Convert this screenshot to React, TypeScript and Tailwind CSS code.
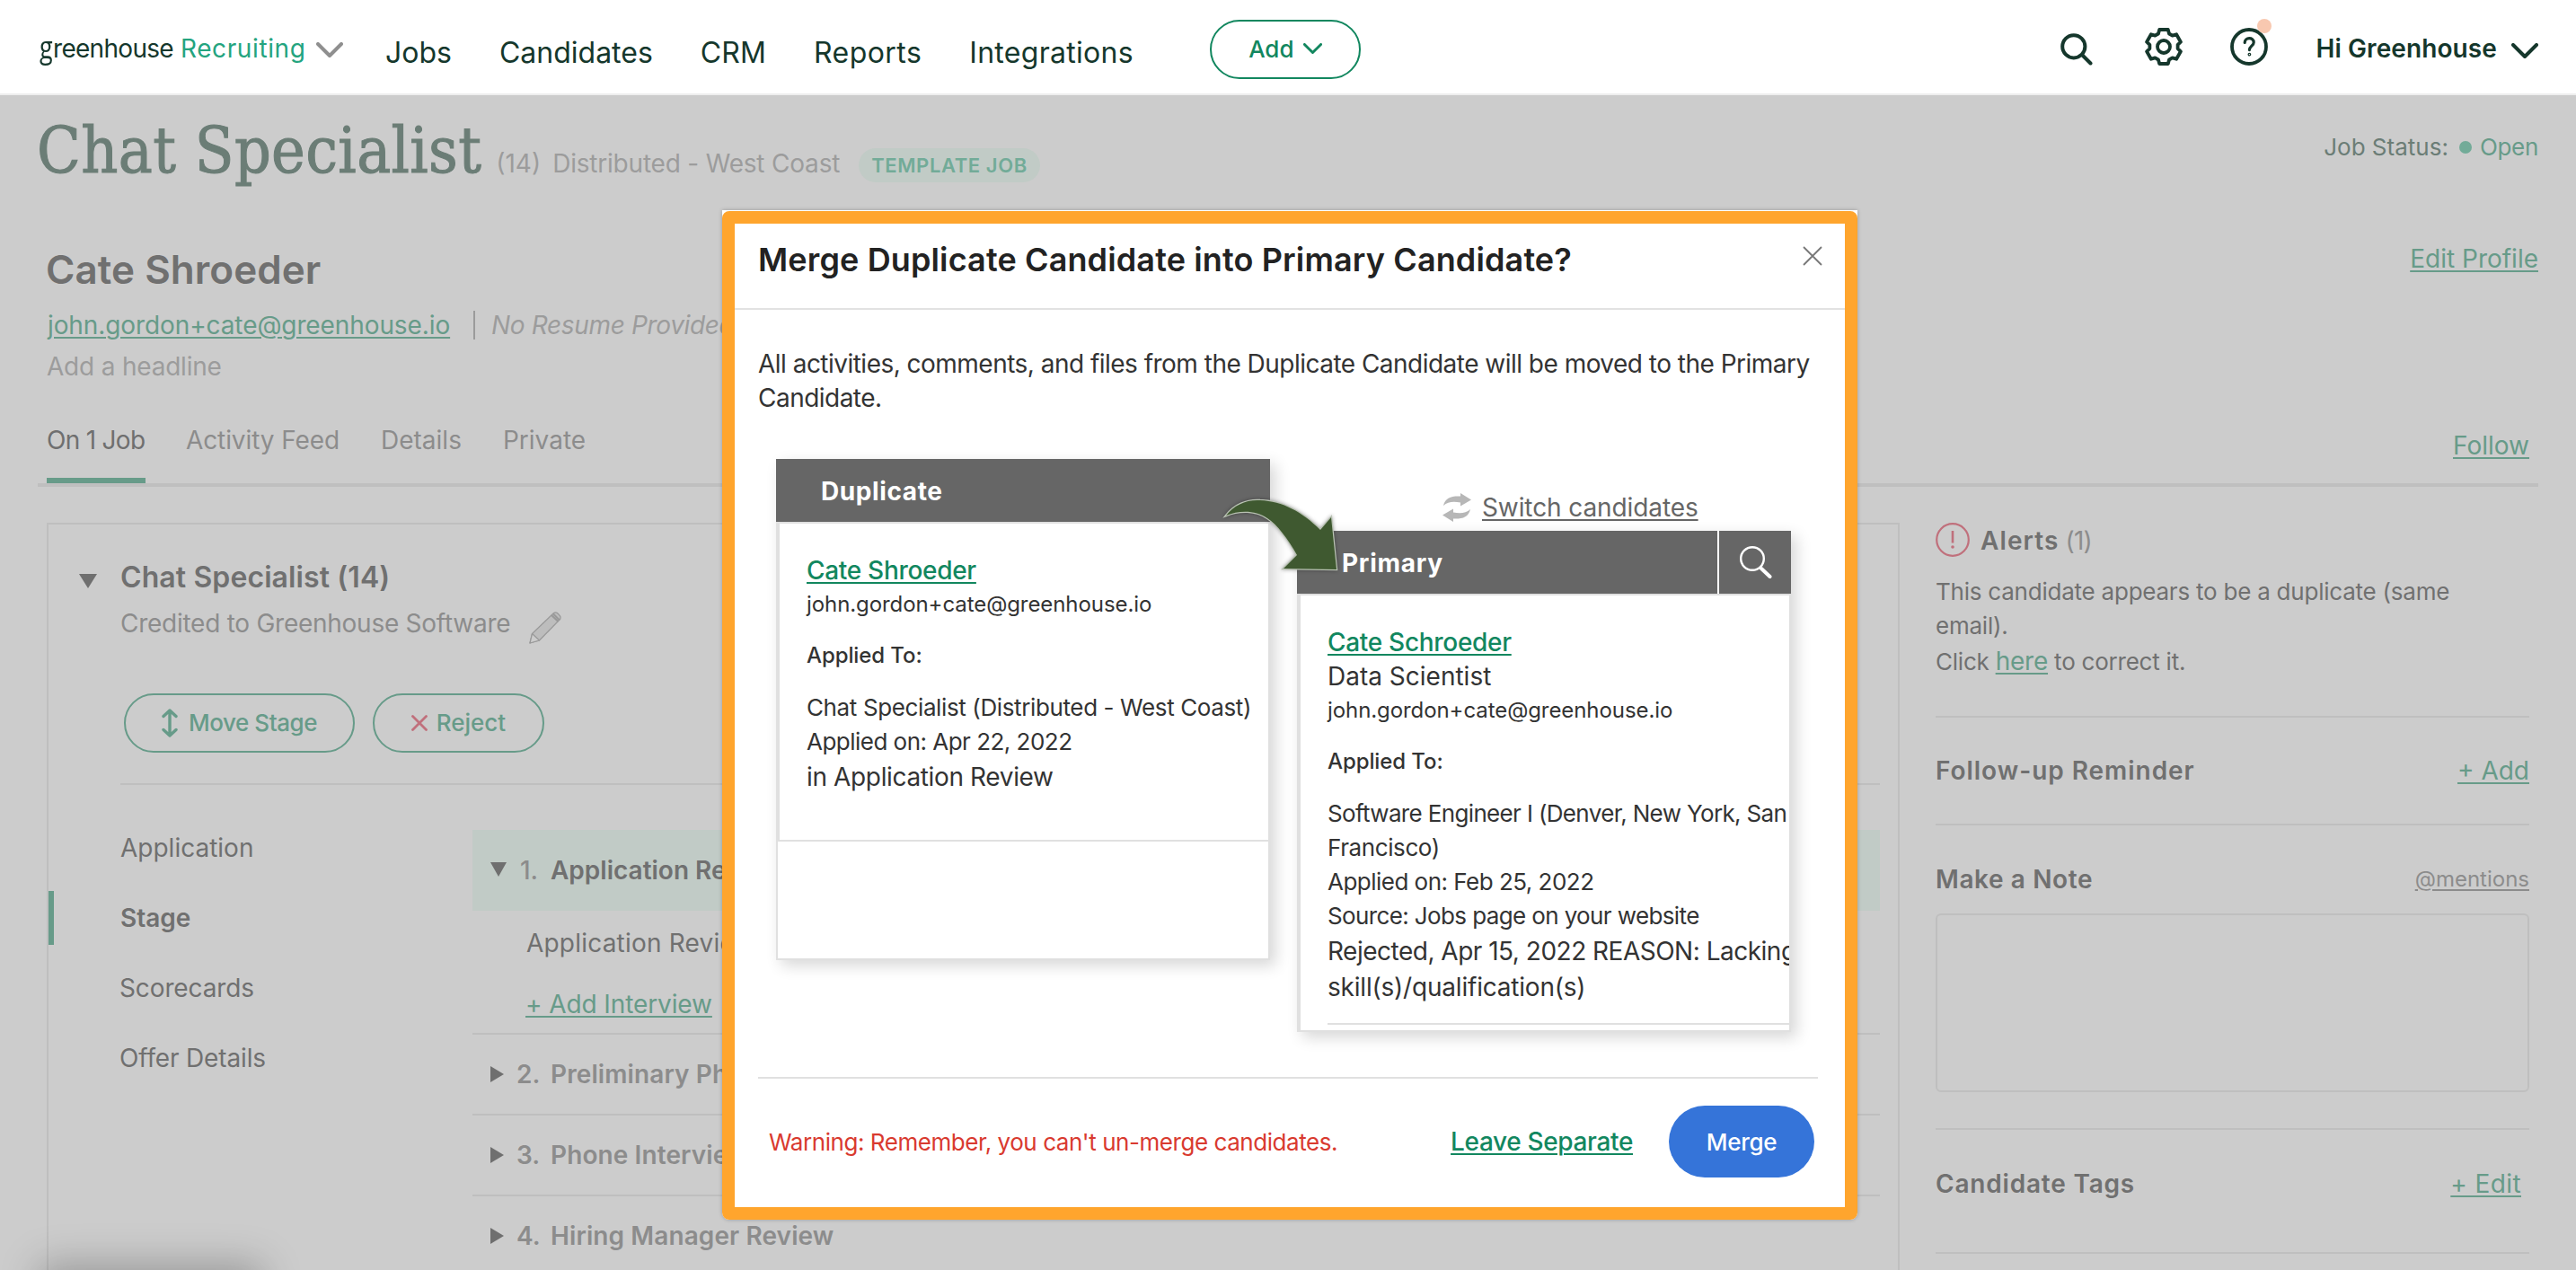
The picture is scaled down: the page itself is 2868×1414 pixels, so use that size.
import React from 'react';
import clsx from 'clsx';

const NavChevron = ({ className, width = 4 }: { className: string; width?: number }) => (
  <svg className={className} viewBox="0 0 30 17" fill="none" stroke="currentColor" strokeWidth={width} strokeLinecap="round" strokeLinejoin="round">
    <path d="M2 2 L15 15 L28 2" />
  </svg>
);

const SearchIcon = () => (
  <svg className="w-9 h-9" viewBox="0 0 36 36" fill="none" stroke="currentColor" strokeWidth="4" strokeLinecap="round">
    <circle cx="14.8" cy="14.8" r="12.6" />
    <path d="M24.5 24.5 L33.5 33.5" />
  </svg>
);

const GearIcon = () => (
  <svg className="w-[42px] h-[42px]" viewBox="-21 -21 42 42" fill="none" stroke="currentColor" strokeWidth="3.8" strokeLinejoin="round">
    <path d="M-4.8 -19 L4.8 -19 L6 -14.5 L9.6 -12.4 L14.1 -13.7 L18.9 -5.3 L15.6 -2.1 L15.6 2.1 L18.9 5.3 L14.1 13.7 L9.6 12.4 L6 14.5 L4.8 19 L-4.8 19 L-6 14.5 L-9.6 12.4 L-14.1 13.7 L-18.9 5.3 L-15.6 2.1 L-15.6 -2.1 L-18.9 -5.3 L-14.1 -13.7 L-9.6 -12.4 L-6 -14.5 Z" />
    <circle r="7" />
  </svg>
);

const HelpIcon = () => (
  <svg className="w-[42px] h-[42px]" viewBox="-21 -21 42 42" fill="none" stroke="currentColor" strokeWidth="3.8" strokeLinecap="round">
    <circle r="19" />
    <path d="M-4.8 -4.5 C-4.8 -11 5.2 -11 5.2 -4.8 C5.2 -1 0.4 -0.6 0.4 3.6" strokeWidth="3.2" />
    <circle cx="0.4" cy="8.6" r="0.6" strokeWidth="2.6" />
  </svg>
);

const PencilIcon = () => (
  <svg className="w-9 h-9" viewBox="0 0 36 36" fill="#bdbdbd" stroke="#999999" strokeWidth="1.2" strokeLinejoin="round">
    <path d="M1 35 L3.5 24.5 L27 2 Q30 -0.5 33 3 Q36.5 6.5 34 9 L11.5 32 Z" />
    <path d="M1 35 L3.5 24.5 L11.5 32 Z" fill="#cccccc" />
    <path d="M25 4 L32.5 11 M27 2.5 L34 9.5" strokeWidth="2" />
  </svg>
);

const SwitchIcon = () => (
  <svg className="w-8 h-8" viewBox="0 0 32 32" fill="#b7b7b7">
    <path d="M1 14 C3 5 10 3 20 3.5 V0 L32 7.5 L20 14.5 V10.5 C12 9 6 9.5 1 14 Z" />
    <path d="M31 18 C29 27 22 29 12 28.5 V32 L0 24.5 L12 17.5 V21.5 C20 23 26 22.5 31 18 Z" />
  </svg>
);

const MergeArrow = () => (
  <svg className="absolute left-[516px] top-[39px] w-[136px] h-[92px] drop-shadow-[0_0_2px_rgba(0,0,0,0.35)]" viewBox="0 0 136 92">
    <path
      d="M5 24 C14 12 28 6 43 7 C68 8 90 20 110 40 L122 26 L128 84 L69 83 L84 68 C74 50 62 34 51 27 C38 18 20 18 5 24 Z"
      fill="#3f5930"
      stroke="#b9c2b3"
      strokeWidth="2.5"
      paintOrder="stroke"
    />
  </svg>
);

const Triangle = ({ open, className }: { open?: boolean; className?: string }) => (
  <svg className={className} viewBox="0 0 20 20" fill="#6f6f6f" preserveAspectRatio="none">
    <path d={open ? 'M0 0 H20 L10 20 Z' : 'M0 0 L20 10 L0 20 Z'} />
  </svg>
);

const navItems = [
  { label: 'Jobs', className: 'tracking-normal' },
  { label: 'Candidates', className: 'tracking-normal' },
  { label: 'CRM', className: 'tracking-[0.1px]' },
  { label: 'Reports', className: 'tracking-[0.45px]' },
  { label: 'Integrations', className: 'tracking-[0.28px]' },
];

const stages = [
  { n: '2.', name: 'Preliminary Phone Screen' },
  { n: '3.', name: 'Phone Interview' },
  { n: '4.', name: 'Hiring Manager Review' },
];

const link = 'underline decoration-2 underline-offset-[3px]';

const Header: React.FC = () => (
  <header className="flex items-center h-[106px] pl-11 pr-[42px] bg-white border-b-2 border-[#eeeeee] text-[#15372c]">
    <div className="flex items-center w-[385px] pt-[3px]">
      <span className="flex items-baseline text-[28px] leading-8 whitespace-nowrap">
        <span className="inline-block w-[15px] origin-[50%_75%] scale-y-[1.3] font-['Open_Sans'] text-[27px]">g</span>
        <span className="tracking-[-0.7px]">reenhouse</span>
        <span className="ml-2 tracking-[0.6px] text-[#24a47f]">Recruiting</span>
      </span>
      <NavChevron className="w-[30px] h-[17px] ml-[12px] mt-1 text-[#8f8f8f]" />
    </div>
    <nav className="flex gap-[53px] pt-[13px] text-[32px] leading-10">
      {navItems.map((item) => (
        <a key={item.label} className={item.className}>{item.label}</a>
      ))}
    </nav>
    <button className="flex items-center justify-center gap-2.5 w-[168px] h-[66px] ml-[85px] mt-1.5 pb-0.5 rounded-full border-2 border-[#12875f] text-[#12875f] text-[26px] font-medium">
      Add
      <NavChevron className="w-[21px] h-3" width={4.2} />
    </button>

    <div className="flex items-center ml-auto">
      <div className="mt-1.5"><SearchIcon /></div>
      <div className="ml-[58px]"><GearIcon /></div>
      <div className="relative ml-[53px]">
        <HelpIcon />
        <span className="absolute -top-2.5 -right-1 w-4 h-4 rounded-full bg-[#f8c8b0]" />
      </div>
      <span className="ml-[53px] pt-1 text-[28px] leading-8 font-semibold tracking-[0.1px]">Hi Greenhouse</span>
      <NavChevron className="w-[30px] h-[17px] ml-[16px] mt-2" />
    </div>
  </header>
);

const CandidateHeader: React.FC = () => (
  <>
    <div className="flex items-baseline pt-5">
      <h1 className="ml-[-1px] font-['DejaVu_Serif_Condensed','DejaVu_Serif',serif] text-[71px] leading-[84px] tracking-[0.35px] [-webkit-text-stroke:1px_#6b7d76] text-[#6b7d76]">Chat Specialist</h1>
      <span className="ml-4 text-[28px] text-[#9c9c9c]">(14)</span>
      <span className="ml-[13px] text-[28px] tracking-[-0.2px] text-[#9c9c9c]">Distributed - West Coast</span>
      <span className="ml-[21px] px-[14px] rounded-full bg-[#c1cbc6] text-[22px] leading-[38px] font-semibold tracking-[0.6px] text-[#72ab98]">TEMPLATE JOB</span>
      <div className="flex items-center self-start ml-auto mt-[22px] text-[26px] leading-8">
        <span className="text-[#6b7d76]">Job Status:</span>
        <span className="w-3.5 h-3.5 ml-3 mr-[9px] rounded-full bg-[#72ab98]" />
        <span className="tracking-[-0.3px] text-[#679b89]">Open</span>
      </div>
    </div>

    <div className="flex items-start justify-between mt-[62px] pl-[9px]">
      <h2 className="text-[44px] leading-14 font-semibold tracking-[0.05px] text-[#707070]">Cate Shroeder</h2>
      <a className={clsx(link, 'text-[28px] leading-8 text-[#679b89]')}>Edit Profile</a>
    </div>
    <div className="flex items-center mt-[18px] pl-[9px] text-[28px] leading-8">
      <a className={clsx(link, 'pl-0.5 tracking-[-0.1px] text-[#679b89]')}>john.gordon+cate@greenhouse.io</a>
      <span className="w-0.5 h-8 ml-[26px] mr-[18px] bg-[#9b9b9b]" />
      <span className="italic tracking-[-0.35px] text-[#9c9c9c]">No Resume Provided</span>
    </div>
    <p className="mt-[14px] pl-2.5 text-[28px] leading-8 tracking-[-0.2px] text-[#9c9c9c]">Add a headline</p>

    <div className="flex mt-[50px] pl-2.5 pr-2.5 border-b-4 border-[#bfbfbf] text-[28px] leading-8 text-[#8c8c8c]">
      <div className="w-[110px] h-16 border-b-[6px] border-[#679b89] text-[#6f6f6f] tracking-[-0.7px] whitespace-nowrap">On 1 Job</div>
      <div className="ml-[45px] tracking-[-0.1px]">Activity Feed</div>
      <div className="ml-[46px]">Details</div>
      <div className="ml-[46px]">Private</div>
      <a className={clsx(link, 'ml-auto mt-1.5 text-[#679b89]')}>Follow</a>
    </div>
  </>
);

const JobPanel: React.FC = () => (
  <section className="w-[2063px] h-[900px] border-2 border-[#bfbfbf] text-[28px] leading-8 text-[#707070]">
    <div className="flex h-10 items-center mt-[39px]">
      <Triangle open className="w-5 h-4 ml-[34px] mt-2" />
      <h3 className="ml-[26px] text-[32px] leading-10 font-semibold tracking-[0.1px]">Chat Specialist (14)</h3>
    </div>
    <div className="flex items-center mt-3.5 ml-[80px] text-[#8c8c8c]">
      <span className="tracking-[-0.26px]">Credited to Greenhouse Software</span>
      <div className="ml-[21px] mt-1 -mb-1.5"><PencilIcon /></div>
    </div>

    <div className="flex gap-5 mt-[61px] ml-[84px] text-[26px] font-medium text-[#679b89]">
      <button className="flex items-center justify-center gap-3 w-[257px] h-[66px] rounded-full border-2">
        <svg className="w-[18px] h-8" viewBox="0 0 18 32" fill="none" stroke="currentColor" strokeWidth="3.4" strokeLinecap="round" strokeLinejoin="round">
          <path d="M9 2 V30 M2 8.5 L9 2 L16 8.5 M2 23.5 L9 30 L16 23.5" />
        </svg>
        <span className="tracking-[-0.45px]">Move Stage</span>
      </button>
      <button className="flex items-center justify-center gap-2.5 w-[191px] h-[66px] rounded-full border-2">
        <svg className="w-[18px] h-[18px]" viewBox="0 0 18 18" stroke="#c0707c" strokeWidth="2.8" strokeLinecap="round">
          <path d="M1.5 1.5 L16.5 16.5 M16.5 1.5 L1.5 16.5" />
        </svg>
        Reject
      </button>
    </div>

    <div className="h-0.5 mt-[34px] ml-20 mr-5 bg-[#bfbfbf]" />

    <div className="flex">
      <ul className="w-[472px] mt-[31px] leading-[78px]">
        <li className="pl-[80px]">Application</li>
        <li className="flex items-center font-semibold">
          <span className="w-1.5 h-[60px] mr-[74px] bg-[#679b89]" />Stage
        </li>
        <li className="pl-[79px] tracking-[-0.12px]">Scorecards</li>
        <li className="pl-[79px] tracking-[-0.15px]">Offer Details</li>
      </ul>
      <div className="flex-1 mt-[50px] mr-5">
        <div className="flex items-center h-[90px] pl-5 bg-[#c1cbc6] font-semibold">
          <Triangle open className="w-[18px] h-4 -mt-0.5" />
          <span className="w-[34px] ml-[15px] text-[#8c8c8c] font-medium">1.</span>
          Application Review
        </div>
        <p className="mt-5 pl-[60px] tracking-[0.2px]">Application Review</p>
        <p className="mt-9 pb-4 pl-[59px] border-b-2 border-[#bfbfbf]">
          <a className={clsx(link, 'text-[#679b89] tracking-[-0.1px]')}>+ Add Interview</a>
        </p>
        {stages.map((stage) => (
          <div key={stage.n} className="flex items-center h-[90px] pl-5 border-b-2 border-[#bfbfbf] font-semibold text-[#8c8c8c] tracking-[0.1px]">
            <Triangle className="w-[15px] h-[18px]" />
            <span className="w-[38px] ml-[14px]">{stage.n}</span>
            {stage.name}
          </div>
        ))}
      </div>
    </div>
  </section>
);

const Sidebar: React.FC = () => (
  <aside className="w-[661px] mr-2.5 text-[28px] text-[#707070]">
    <div className="flex items-center h-[38px]">
      <svg className="w-[38px] h-[38px]" viewBox="0 0 38 38" fill="none" stroke="#c0707c" strokeWidth="2.2">
        <circle cx="19" cy="19" r="17.8" />
        <path d="M19 9 V22.5" strokeWidth="2.6" />
        <circle cx="19" cy="27" r="1.8" fill="#c0707c" stroke="none" />
      </svg>
      <h4 className="ml-3 pt-0.5 font-semibold tracking-[1.1px]">Alerts</h4>
      <span className="ml-[7px] pt-0.5 text-[28px] tracking-[-0.8px] text-[#8c8c8c]">(1)</span>
    </div>
    <div className="mt-5 text-[26px] leading-[38px] tracking-[-0.23px]">
      <p>
        This candidate appears to be a duplicate (same<br />
        email).
      </p>
      <p className="leading-10">
        Click <a className={clsx(link, 'text-[28px] text-[#679b89]')}>here</a> to correct it.
      </p>
    </div>
    <div className="h-0.5 mt-10 bg-[#bfbfbf]" />
    <div className="flex items-center justify-between h-[118px]">
      <h4 className="font-semibold tracking-[0.96px]">Follow-up Reminder</h4>
      <a className={clsx(link, 'text-[#679b89]')}>+ Add</a>
    </div>
    <div className="h-0.5 bg-[#bfbfbf]" />
    <div className="flex items-center justify-between h-[98px] pt-[21px]">
      <h4 className="font-semibold tracking-[0.6px]">Make a Note</h4>
      <a className={clsx(link, 'text-[24px] text-[#8c8c8c]')}>@mentions</a>
    </div>
    <div className="h-[199px] rounded-md border-2 border-[#bfbfbf]" />
    <div className="h-0.5 mt-10 bg-[#bfbfbf]" />
    <div className="flex items-center justify-between h-[136px] pb-4 pr-[9px]">
      <h4 className="font-semibold tracking-[0.8px]">Candidate Tags</h4>
      <a className={clsx(link, 'text-[#679b89] tracking-[0.4px]')}>+ Edit</a>
    </div>
    <div className="h-0.5 bg-[#bfbfbf]" />
  </aside>
);

const cardShadow = 'shadow-[6px_6px_16px_rgba(0,0,0,0.16)]';

const DuplicateCard: React.FC = () => (
  <div className={clsx('flex flex-col w-[550px] h-[558px]', cardShadow)}>
    <div className="h-[70px] pl-[50px] bg-[#666666] text-white text-[28px] leading-[73px] font-bold tracking-[0.6px]">Duplicate</div>
    <div className="flex-1 border-x-2 border-b-2 border-[#e0e0e0]">
      <div className="h-[356px] pt-[33px] pl-[30px] border-l-2 border-y-2 border-[#e0e0e0] text-[26px] leading-[38px] whitespace-nowrap overflow-hidden">
        <p className="text-[28px] tracking-[-0.3px]"><a className={clsx(link, 'font-medium text-[#12875f]')}>Cate Shroeder</a></p>
        <p className="text-[24px] tracking-[-0.08px]">john.gordon+cate@greenhouse.io</p>
        <p className="mt-[19px] text-[24px] font-medium tracking-[-0.1px]">Applied To:</p>
        <p className="mt-5 tracking-[-0.38px]">Chat Specialist (Distributed - West Coast)</p>
        <p className="tracking-[-0.52px]">Applied on: Apr 22, 2022</p>
        <p className="text-[28px] leading-10 tracking-[-0.36px]">in Application Review</p>
      </div>
    </div>
  </div>
);

const PrimaryCard: React.FC = () => (
  <div className={clsx('flex flex-col w-[550px] h-[558px]', cardShadow)}>
    <div className="flex h-[70px] bg-[#666666] text-white">
      <div className="w-[468px] pl-[50px] text-[28px] leading-[73px] font-bold tracking-[0.7px]">Primary</div>
      <div className="flex flex-1 items-center pl-[23px] border-l-2 border-white">
        <svg className="w-9 h-9" viewBox="0 0 36 36" fill="none" stroke="currentColor" strokeLinecap="round">
          <circle cx="14" cy="14" r="12.8" strokeWidth="2.4" />
          <path d="M24 25 L33.5 34" strokeWidth="4" />
        </svg>
      </div>
    </div>
    <div className="flex-1 border-x-2 border-b-2 border-[#e0e0e0] overflow-hidden">
      <div className="h-full pt-[33px] pl-[30px] border-l-2 border-t-2 border-[#e0e0e0] text-[26px] leading-[38px] whitespace-nowrap overflow-hidden">
        <p className="text-[28px] tracking-[-0.3px]"><a className={clsx(link, 'font-medium text-[#12875f]')}>Cate Schroeder</a></p>
        <p className="text-[28px]">Data Scientist</p>
        <p className="text-[24px] tracking-[-0.08px]">john.gordon+cate@greenhouse.io</p>
        <p className="mt-[19px] text-[24px] font-medium tracking-[-0.1px]">Applied To:</p>
        <p className="mt-5 tracking-[-0.65px]">Software Engineer I (Denver, New York, San</p>
        <p className="tracking-[-0.4px]">Francisco)</p>
        <p className="tracking-[-0.52px]">Applied on: Feb 25, 2022</p>
        <p className="tracking-[-0.62px]">Source: Jobs page on your website</p>
        <p className="text-[28px] leading-10 tracking-[-0.5px]">
          Rejected, Apr 15, 2022 REASON: Lacking<br />
          <span className="tracking-[-0.2px]">skill(s)/qualification(s)</span>
        </p>
        <div className="h-0.5 mt-5 bg-[#e0e0e0]" />
      </div>
    </div>
  </div>
);

const MergeModal: React.FC = () => (
  <div className="absolute left-[804px] top-[234px] w-[1264px] h-[1124px] pt-px bg-white rounded-b-lg shadow-[0_0_4px_rgba(0,0,0,0.25)]">
    <div className="h-[1123px] rounded-lg border-[14px] border-[#ffa52d] bg-white text-[#333333]">
      <div className="flex items-start justify-between h-24 pl-[26px] pr-[25px] border-b-2 border-[#e2e2e2]">
        <h2 className="text-[36px] leading-[80px] font-semibold tracking-[0.13px] text-[#222222]">Merge Duplicate Candidate into Primary Candidate?</h2>
        <svg className="w-[22px] h-[22px] mt-[25px]" viewBox="0 0 22 22" stroke="#777777" strokeWidth="1.8">
          <path d="M1 1 L21 21 M21 1 L1 21" />
        </svg>
      </div>

      <div className="pl-[26px] pr-[30px]">
        <p className="mt-[41px] text-[28px] leading-[38px] tracking-[-0.52px]">
          All activities, comments, and files from the Duplicate Candidate will be moved to the Primary Candidate.
        </p>

        <div className="relative flex gap-[30px] mt-[49px] pl-5">
          <DuplicateCard />
          <div>
            <div className="flex items-center h-20 pt-[27px] pl-[162px] text-[28px] text-[#666666]">
              <SwitchIcon />
              <a className={clsx(link, 'ml-3 tracking-[-0.1px]')}>Switch candidates</a>
            </div>
            <PrimaryCard />
          </div>
          <MergeArrow />
        </div>

        <div className="flex items-center mt-[50px] pt-[30px] border-t-2 border-[#e0e0e0]">
          <p className="ml-3 text-[26px] tracking-[-0.45px] text-[#d93a2f]">Warning: Remember, you can't un-merge candidates.</p>
          <a className={clsx(link, 'ml-auto text-[28px] font-medium tracking-[-0.35px] text-[#12875f]')}>Leave Separate</a>
          <button className="w-[162px] h-20 ml-10 mr-1 rounded-full bg-[#3574d9] text-white text-[26px] font-medium tracking-[-0.3px]">Merge</button>
        </div>
      </div>
    </div>
  </div>
);

export default function App() {
  return (
    <div className="relative w-[2868px] h-[1414px] overflow-hidden bg-[#cccccc] font-['Inter','Liberation_Sans',sans-serif]">
      <Header />
      <main className="px-[42px]">
        <CandidateHeader />
        <div className="flex items-start justify-between mt-10 pl-2.5">
          <JobPanel />
          <Sidebar />
        </div>
      </main>
      {/* top edge of the browser status bubble's shadow */}
      <div className="absolute left-[50px] top-[1414px] w-[236px] h-10 shadow-[0_0_44px_6px_rgba(0,0,0,0.26)]" />
      <MergeModal />
    </div>
  );
}
